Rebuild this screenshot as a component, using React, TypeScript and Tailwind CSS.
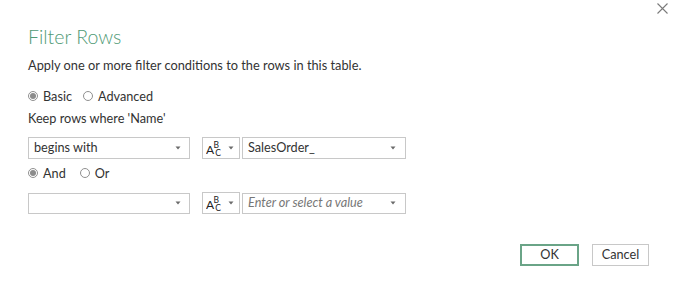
import React from "react";

const Arrow = () => (
  <svg width="6" height="4" viewBox="0 0 6 4" className="shrink-0">
    <path d="M0.5 0.5 L5.5 0.5 L3 3.5 Z" fill="#6b6b6b" />
  </svg>
);

const Radio = ({ checked, label, gap }: { checked?: boolean; label: string; gap?: string }) => (
  <div className={`flex items-center ${gap ?? ""}`}>
    <span className="w-[10px] h-[10px] rounded-full border border-[#909090] flex items-center justify-center bg-white">
      {checked && <span className="w-[6px] h-[6px] rounded-full bg-[#8c8c8c]" />}
    </span>
    <span className="ml-[5px] text-[12.7px] leading-[16px] text-[#333]">{label}</span>
  </div>
);

const TypeBox = () => (
  <div className="w-[38px] h-[22px] border border-[#c8c8c8] flex items-center pl-[3px] pr-[5px] justify-between">
    <svg width="17" height="17" viewBox="0 0 17 17" className="shrink-0">
      <g fill="#222" fontFamily="Lato, 'Open Sans', sans-serif">
        <text x="0" y="14" fontSize="12">A</text>
        <text x="7.6" y="7.5" fontSize="8.5">B</text>
        <text x="9.2" y="16" fontSize="8.5">C</text>
      </g>
    </svg>
    <Arrow />
  </div>
);

export default function App() {
  return (
    <div
      className="w-[677px] h-[294px] bg-white flex flex-col text-[#333]"
      style={{ fontFamily: 'Lato, "Open Sans", sans-serif' }}
    >
      <div className="flex justify-end pr-[9px] pt-[3px] h-[14px]">
        <svg width="11" height="11" viewBox="0 0 11 11">
          <path d="M0.5 0.5 L10.5 10.5 M10.5 0.5 L0.5 10.5" stroke="#7a7a7a" strokeWidth="1.1" />
        </svg>
      </div>
      <div className="pl-[28px] pr-[28px] flex flex-col">
        <div className="mt-[10px] text-[19.5px] leading-[26px] font-light text-[#4f9a75]">Filter Rows</div>
        <div className="mt-[7px] text-[12.8px] leading-[17px]">
          Apply one or more filter conditions to the rows in this table.
        </div>
        <div className="mt-[14px] flex items-center h-[16px]">
          <Radio checked label="Basic" />
          <Radio label="Advanced" gap="ml-[11px]" />
        </div>
        <div className="mt-[6px] text-[12.7px] leading-[17px]">Keep rows where 'Name'</div>
        <div className="mt-[10px] flex items-center">
          <div className="w-[162px] h-[22px] border border-[#c8c8c8] flex items-center justify-between pl-[5px] pr-[8px] text-[12.7px]">
            <span>begins with</span>
            <Arrow />
          </div>
          <div className="ml-[12px]">
            <TypeBox />
          </div>
          <div className="ml-[2px] w-[164px] h-[22px] border border-[#c8c8c8] flex items-center justify-between pl-[5px] pr-[9px] text-[12.7px]">
            <span>SalesOrder_</span>
            <Arrow />
          </div>
        </div>
        <div className="mt-[6px] flex items-center h-[16px]">
          <Radio checked label="And" />
          <Radio label="Or" gap="ml-[14px]" />
        </div>
        <div className="mt-[11px] flex items-center">
          <div className="w-[162px] h-[21px] border border-[#c8c8c8] flex items-center justify-end pl-[5px] pr-[8px]">
            <Arrow />
          </div>
          <div className="ml-[12px]">
            <TypeBox />
          </div>
          <div className="ml-[2px] w-[164px] h-[21px] border border-[#c8c8c8] flex items-center justify-between pl-[5px] pr-[9px] text-[12.7px]">
            <span className="italic text-[#777]">Enter or select a value</span>
            <Arrow />
          </div>
        </div>
        <div className="mt-[30px] flex justify-end gap-[13px]">
          <button className="w-[59px] h-[22px] border-2 border-[#6aa487] text-[12.7px] text-[#333] flex items-center justify-center bg-white">
            OK
          </button>
          <button className="w-[57px] h-[22px] border border-[#c8c8c8] text-[12.7px] text-[#333] flex items-center justify-center bg-white">
            Cancel
          </button>
        </div>
      </div>
    </div>
  );
}
